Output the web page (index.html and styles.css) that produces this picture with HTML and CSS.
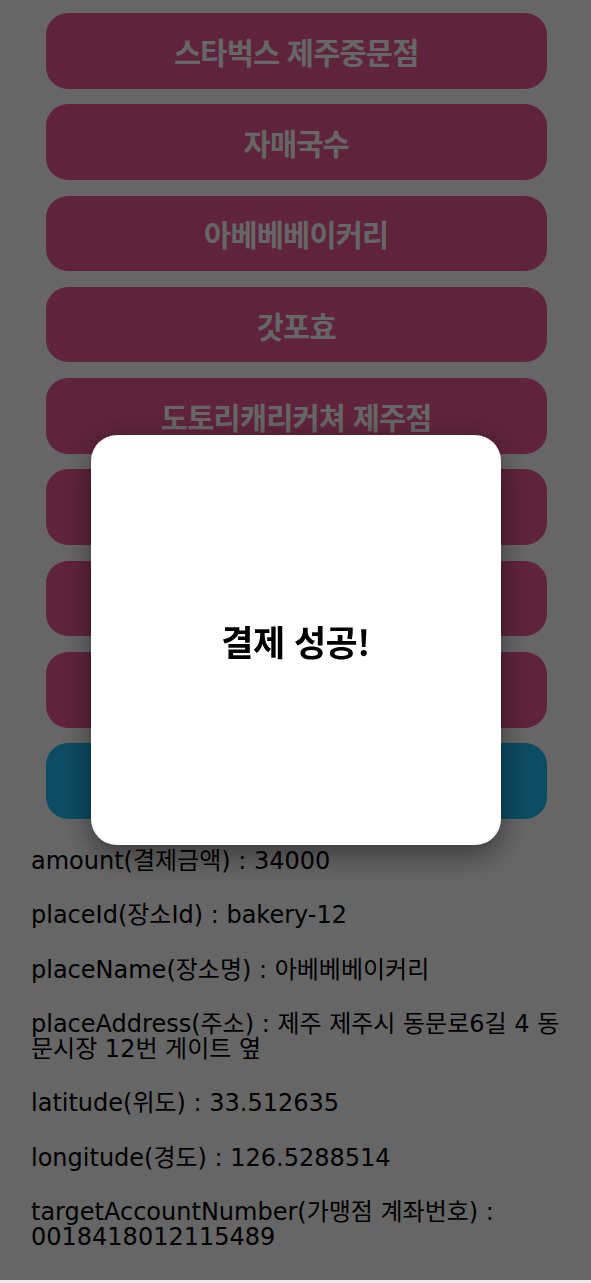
FILE: index.html
```html
<!DOCTYPE html>
<html lang="ko">
<head>
<meta charset="utf-8">
<title>결제 성공</title>
<link rel="stylesheet" href="styles.css">
</head>
<body>
<div class="page">
  <div class="list">
    <button class="place">스타벅스 제주중문점</button>
    <button class="place">자매국수</button>
    <button class="place">아베베베이커리</button>
    <button class="place">갓포효</button>
    <button class="place">도토리캐리커쳐 제주점</button>
    <button class="place" aria-label="장소"></button>
    <button class="place" aria-label="장소"></button>
    <button class="place" aria-label="장소"></button>
    <button class="place pay" aria-label="결제"></button>
  </div>
  <div class="info">
    <p>amount(결제금액) : 34000</p>
    <p>placeId(장소Id) : bakery-12</p>
    <p>placeName(장소명) : 아베베베이커리</p>
    <p>placeAddress(주소) : 제주 제주시 동문로6길 4 동문시장 12번 게이트 옆</p>
    <p>latitude(위도) : 33.512635</p>
    <p>longitude(경도) : 126.5288514</p>
    <p>targetAccountNumber(가맹점 계좌번호) : 0018418012115489</p>
  </div>
</div>
<div class="overlay">
  <div class="modal">
    <h2 class="modal-title">결제 성공!</h2>
  </div>
</div>
</body>
</html>
```
FILE: styles.css
```css
html {
  background: #efe7ea;
}
body {
  margin: 0;
  font-family: "DejaVu Sans", "Noto Sans CJK KR", sans-serif;
}
.page {
  background: #ffffff;
  height: 1280px;
  overflow: hidden;
}
.list {
  display: flex;
  flex-direction: column;
  gap: 15.8px;
  padding: 13px 44px 0 45.5px;
}
.place {
  height: 75.5px;
  border: none;
  border-radius: 22px;
  background: #ed5894;
  color: #ffffff;
  font-family: "Noto Sans CJK KR", sans-serif;
  font-weight: 700;
  font-size: 29.5px;
  letter-spacing: -0.8px;
  padding: 0;
}
.place.pay {
  background: #20bdf5;
}
.info {
  padding: 0 31px;
}
.info p {
  margin: 30px 0;
  font-size: 24px;
  line-height: 24.5px;
  color: #000;
}
.overlay {
  position: fixed;
  top: 0;
  left: 0;
  right: 0;
  bottom: 3px;
  background: rgba(0, 0, 0, 0.6);
  display: flex;
  align-items: center;
  justify-content: center;
}
.modal {
  width: 410px;
  height: 410px;
  background: #ffffff;
  border-radius: 26px;
  box-shadow: 0 10px 30px rgba(0, 0, 0, 0.45);
  display: flex;
  align-items: center;
  justify-content: center;
}
.modal-title {
  margin: 0;
  font-family: "Noto Sans CJK KR", sans-serif;
  font-weight: 700;
  font-size: 35px;
  letter-spacing: -0.5px;
  color: #000;
}
```
